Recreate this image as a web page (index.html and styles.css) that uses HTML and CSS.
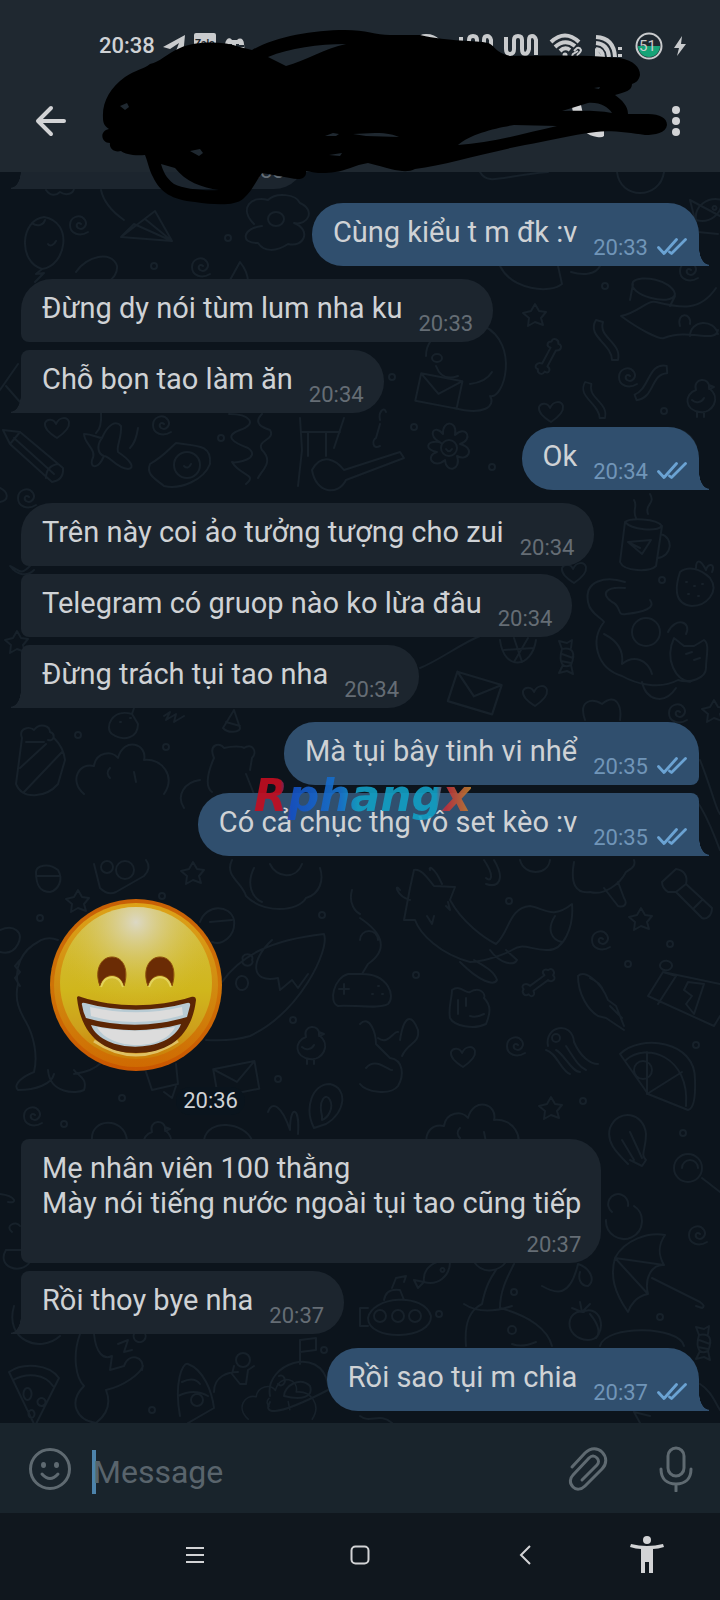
FILE: index.html
```html
<!DOCTYPE html>
<html lang="vi">
<head>
  <meta charset="UTF-8">
  <meta name="viewport" content="width=device-width, initial-scale=1.0">
  <title>Chat</title>
  <link rel="stylesheet" href="styles.css">
</head>
<body>
  <svg class="defs" width="0" height="0" aria-hidden="true">
    <defs>
      <symbol id="ticks" viewBox="0 0 30 17">
        <path d="M1.5 9.5L7 15.5L19.5 1.5M12.5 14L14.5 15.5L28.5 1.5" fill="none" stroke="currentColor" stroke-width="2.8" stroke-linecap="round" stroke-linejoin="round"/>
      </symbol>
      <path id="star" d="M0 -11L4 -4L11 -3L6 3L8 10L0 7L-7 11L-6 3L-12 -2L-4 -4Z"/>
      <path id="heart" d="M0 10C-8 5 -13 0 -12 -5C-10 -10 -3 -9 -1 -4C2 -11 10 -12 12 -6C13 0 6 6 0 10Z"/>
      <path id="swirl" d="M1 0C-2 -3 -5 1 -2 4C3 7 8 1 5 -4C0 -11 -10 -7 -10 1C-10 10 0 13 8 8"/>
      <path id="bone" d="M-9 -3L9 -3C8 -8 13 -9 15 -5C20 -6 20 1 16 2C17 7 11 8 9 3L-9 3C-10 8 -15 8 -15 3C-20 3 -20 -3 -16 -4C-17 -9 -10 -9 -9 -3Z"/>
      <circle id="dot" r="3"/>
      <path id="envelope" d="M-20 -14L22 -12L20 16L-22 14ZM-20 -14L0 4L22 -12"/>
      <path id="cloud" d="M-36 24C-52 10 -40 -8 -26 -4C-24 -18 -8 -20 -2 -12C4 -34 28 -26 24 -10C42 -12 56 6 44 24M-10 -2C-14 2 -12 6 -10 8M14 2L16 12"/>
      <path id="candy" d="M-5 -8C-9 6 -4 12 4 8C9 -4 6 -10 -5 -8ZM-5 -8L-8 -16L0 -14L5 -17L4 -9M-4 8L-8 16L0 14L6 17L4 8M-5 -3L6 1M-6 4L4 6"/>
      <path id="ribbon" d="M-12 -20C-22 -4 4 4 4 20L10 20C14 2 -10 -2 -5 -18Z"/>
      <path id="chick" d="M-4 -6C-8 -18 10 -20 9 -8C22 2 12 18 0 16C-16 14 -16 -2 -4 -6ZM9 -11L14 -9L9 -7M-8 4C-4 8 2 6 4 2M-3 16V21M4 16V21"/>
      <path id="pizza" d="M-24 -20C-10 -30 16 -28 26 -14L2 34ZM-20 -12C-6 -20 12 -18 20 -6M-6 -4A4 6 0 1 0 -5 -4M8 6A4 4 0 1 0 9 6M-2 18A3 4 0 1 0 -1 18"/>
      <path id="flower" d="M-7 -5C-22 -12 -14 -25 -5 -14C-6 -28 10 -28 7 -13C18 -24 26 -8 12 -4C28 0 20 14 9 8C14 22 -2 26 -3 12C-14 22 -24 8 -11 4C-24 2 -22 -8 -9 -6M9 0A8 8 0 1 0 -7 0A8 8 0 1 0 9 0M-2 1C0 4 2 4 4 1"/>
      <path id="fish" d="M-14 10C-16 -4 -2 -14 12 -10C12 4 0 14 -14 10L-20 16L-24 8L-14 10M4 -4A2 2 0 1 0 5 -4"/>
    </defs>
  </svg>

  <header class="topbar">
    <div class="status">
      <div class="status-group left">
        <span class="clock">20:38</span>
        <svg class="st-plane" viewBox="0 0 24 24"><path d="M1 13L23 1L21 22L14 17L17 9L8 15Z"/></svg>
        <svg class="st-zalo" viewBox="0 0 24 28"><rect x="1" y="1" width="22" height="26" rx="2"/><text x="2" y="15">Zalo</text></svg>
        <svg class="st-game" viewBox="0 0 22 24"><path fill-rule="evenodd" d="M1 10C2 4 6 3 8 6H13C16 3 20 5 20 10L21 20H1ZM5 10V16H8V10ZM12 10V16H16V13H20V11H15V10Z"/></svg>
      </div>
      <div class="status-group">
        <svg class="st-wave" viewBox="0 0 34 28"><path d="M3 9Q6 4 12 4Q20 4 24 9"/></svg>
        <svg class="st-wave" viewBox="0 0 34 28"><path d="M2 5V19Q2 24 6 24T10 19V8Q10 4 14 4T18 8V19Q18 24 21 24T25 19V8Q25 4 28 4T32 8V24"/></svg>
        <svg class="st-wave" viewBox="0 0 34 28"><path d="M2 5V17Q2 22 6 22T10 17V8Q10 4 14 4T18 8V17Q18 22 21 22T25 17V8Q25 4 28 4T32 8V23"/></svg>
        <svg class="st-wifi" viewBox="0 0 34 28"><path d="M2 10Q16 -3 30 10M6 15Q16 6 26 14M11 19Q16 14 21 18"/><circle cx="16" cy="23" r="2.5"/><path class="thin" d="M25 19L28 16Q31 15 32 18Q32 20 28 23M29 19L24 22Q22 25 25 26L29 24"/></svg>
        <svg class="st-cast" viewBox="0 0 28 28"><path d="M1 5Q19 6 20 25M1 11Q13 12 14 25M1 17Q8 18 8 25"/><path d="M1 20L6 26H1Z"/><path class="dots" d="M25 15V18M25 22V25"/></svg>
        <svg class="st-battery" viewBox="0 0 28 28"><circle class="cell" cx="14" cy="14" r="12.5"/><path class="level" d="M3 14H25A11 11 0 0 1 3 14Z"/><text x="4" y="19">51</text></svg>
        <svg class="st-bolt" viewBox="0 0 14 24"><path d="M9 2L1 14H6L4 22L13 10H8Z"/></svg>
      </div>
    </div>
    <div class="toolbar">
      <button type="button" class="icon-btn" aria-label="Back">
        <svg width="32" height="32" viewBox="0 0 32 32"><path class="arrow" d="M16 3L3 16L16 29M4 16H29"/></svg>
      </button>
      <div class="toolbar-actions">
        <button type="button" class="icon-btn" aria-label="Call">
          <svg width="36" height="36" viewBox="0 0 36 36"><path class="solid" d="M1 2H10L12 11L9 15Q13 23 20 26L24 22L33 25V33Q31 35 26 34Q12 32 5 16Q1 9 1 2Z"/></svg>
        </button>
        <button type="button" class="icon-btn" aria-label="More">
          <svg width="10" height="32" viewBox="0 0 10 32"><g class="solid"><circle cx="5" cy="5" r="4"/><circle cx="5" cy="16" r="4"/><circle cx="5" cy="27" r="4"/></g></svg>
        </button>
      </div>
    </div>
    <svg class="scribble" viewBox="100 26 570 182" aria-hidden="true">
      <path fill-rule="evenodd" d="M103 118C102 102 110 88 125 77C135 70 144 69 150 64C160 62 166 54 180 48C197 41 222 41 240 47L252 50C275 37 312 30 345 30C366 30 376 35 390 35L420 35C450 42 475 40 488 43C496 46 494 52 510 56C550 55 595 55 620 58C634 61 640 67 640 75C639 81 635 83 632 84C632 91 625 92 615 95C622 100 628 106 628 114L648 114C660 114 667 118 667 125C666 133 655 135 645 135C630 133 610 130 596 132C570 135 548 141 525 145C480 154 445 165 415 169C405 174 395 170 368 163C355 165 345 171 335 172C323 174 315 173 306 171C307 180 298 180 290 178L262 173C256 181 252 191 243 199C235 206 215 205 195 202C172 200 160 192 153 177C149 170 148 162 145 155C133 156 125 154 121 151C114 153 109 148 110 143C101 143 99 131 109 129C104 126 103 122 103 118Z
        M268 57C290 48 318 44 346 44C325 48 305 61 286 66Z
        M161 164L175 168C185 181 202 188 219 190C203 191 184 189 174 184C166 178 163 171 161 164Z
        M458 145C470 134 496 128 514 125L557 126C522 134 490 143 458 145Z
        M562 111L588 103C600 102 608 107 612 113C595 110 580 111 562 111Z
        M325 136L333 133L339 134L336 136ZM353 134L375 133C388 133 394 135 399 137L366 136Z
        M329 155L342 153L340 156ZM120 106L127 103L129 107L125 110ZM190 151L200 149L203 153L199 156ZM594 88L600 87L599 89Z"/>
    </svg>
  </header>

  <main class="chat">
    <svg class="wallpaper" viewBox="0 172 720 1251" preserveAspectRatio="xMidYMin slice" aria-hidden="true">
      <use href="#dot" x="228" y="238"/><use href="#dot" x="154" y="266"/><use href="#dot" x="605" y="286"/><use href="#dot" x="392" y="377"/><use href="#dot" x="414" y="427"/>
      <use href="#dot" x="221" y="438"/><use href="#dot" x="492" y="467"/><use href="#dot" x="664" y="411"/><use href="#dot" x="662" y="580"/><use href="#dot" x="78" y="735"/>
      <use href="#dot" x="166" y="747"/><use href="#dot" x="40" y="918"/><use href="#dot" x="162" y="896"/><use href="#dot" x="322" y="915"/><use href="#dot" x="293" y="1020"/>
      <use href="#dot" x="278" y="1079"/><use href="#dot" x="122" y="1098"/><use href="#dot" x="64" y="1124"/><use href="#dot" x="416" y="975"/><use href="#dot" x="509" y="901"/>
      <use href="#dot" x="628" y="964"/><use href="#dot" x="670" y="944"/><use href="#dot" x="696" y="1045"/><use href="#dot" x="583" y="1101"/><use href="#dot" x="683" y="1133"/>
      <use href="#dot" x="514" y="1292"/><use href="#dot" x="660" y="1317"/><use href="#dot" x="324" y="1350"/><use href="#dot" x="152" y="1410"/><use href="#dot" x="439" y="1314"/>
      <use href="#star" x="535" y="315"/><use href="#star" x="17" y="642"/><use href="#star" x="78" y="901"/><use href="#star" x="193" y="873"/><use href="#star" x="641" y="919"/><use href="#star" x="551" y="1108"/><use href="#star" x="714" y="711"/>
      <use href="#heart" x="57" y="428"/><use href="#heart" x="551" y="412"/><use href="#heart" x="535" y="696"/><use href="#heart" x="463" y="1057"/><use href="#heart" x="574" y="573"/>
      <use href="#swirl" x="80" y="224"/><use href="#swirl" x="202" y="266"/><use href="#swirl" x="163" y="424"/><use href="#swirl" x="690" y="270"/><use href="#swirl" x="629" y="376"/><use href="#swirl" x="679" y="712"/><use href="#swirl" x="602" y="939"/><use href="#swirl" x="517" y="1045"/><use href="#swirl" x="34" y="1115"/><use href="#swirl" x="699" y="1234"/><use href="#swirl" x="28" y="497"/>
      <use href="#bone" transform="translate(549 357) rotate(-62)"/><use href="#bone" transform="translate(539 983) rotate(-36)"/>
      <use href="#envelope" transform="translate(439 390) rotate(8)"/><use href="#envelope" transform="translate(475 692) rotate(14) scale(1.1)"/><use href="#envelope" transform="translate(236 1078) rotate(-14)"/>
      <use href="#cloud" x="120" y="770"/><use href="#cloud" x="470" y="1130"/><use href="#cloud" transform="translate(277 1400) scale(.8)"/>
      <use href="#candy" x="567" y="657"/><use href="#candy" x="704" y="1343"/>
      <use href="#ribbon" x="608" y="340"/><use href="#ribbon" transform="translate(596 400) scale(.9)"/><use href="#ribbon" transform="translate(652 384) rotate(70)"/>
      <use href="#chick" x="700" y="396"/><use href="#chick" x="310" y="1043"/><use href="#chick" x="156" y="1138"/>
      <use href="#pizza" x="33" y="1392"/><use href="#flower" x="448" y="448"/><use href="#fish" x="438" y="1272"/><use href="#fish" x="710" y="210"/>
      <!-- balloon, paper plane, clam -->
      <path d="M44 217C20 220 18 262 42 269C66 266 74 222 44 217ZM42 269L36 274L44 273L35 282M48 244C50 247 54 245 56 241M32 223C38 228 44 224 45 220"/>
      <path d="M121 237L155 211L172 241ZM172 241L134 224L121 237M145 219L172 241M101 190C104 204 114 213 124 220"/>
      <path d="M254 224C238 208 252 195 268 200C276 192 296 194 300 203C316 210 308 226 294 223C312 230 304 248 288 244C276 252 264 252 258 243C240 244 242 228 262 226M284 219A8 7 0 1 0 268 219A8 7 0 1 0 284 219"/>
      <path d="M76 272C86 256 112 250 117 266C118 276 110 280 104 286M230 280L240 262Q248 272 248 282M176 180C184 190 196 194 206 198M46 190C50 196 56 196 60 192C66 196 74 194 74 188"/>
      <!-- pencil, top spinner, egg, guitar player -->
      <path d="M3 430L20 432L63 468Q64 480 52 482L10 444ZM20 432L10 444M46 478Q46 466 58 464M14 438L54 474"/>
      <path d="M84 434C92 434 98 438 102 438C108 424 116 420 121 426C122 438 116 446 118 452C130 460 136 468 128 469C116 468 110 456 104 456C98 470 90 468 92 460C98 450 84 444 84 434ZM102 438C96 446 98 454 104 456M138 428Q136 442 130 448M101 412Q102 428 96 433"/>
      <path d="M176 443C196 446 212 444 210 464C204 480 180 490 164 486C154 478 146 474 150 464C164 456 168 450 176 443ZM200 465A13 13 0 1 0 174 465A13 13 0 1 0 200 465M184 466Q188 470 191 464"/>
      <path d="M229 414C250 414 258 424 240 430C224 436 232 442 248 448C262 458 236 464 232 462C240 476 258 474 246 484M262 414C252 424 264 428 270 430C276 440 256 440 262 450C274 462 262 470 258 478"/>
      <path d="M300 418L302 450L298 486M344 418L334 448M302 432H340M308 432V456M326 432V456M312 470C322 452 336 460 344 470L400 452L404 458L346 480C338 496 316 494 312 470ZM380 420C378 412 384 406 386 412M380 446C372 450 372 440 376 438L380 424"/>
      <!-- bear with letter, sleeping fox -->
      <path d="M426 356C426 330 460 322 478 336M484 326C520 344 504 400 490 396C496 406 484 416 454 408M432 358A5 4 0 1 0 442 358A5 4 0 1 0 432 358M436 366Q442 382 458 376M470 384Q486 382 492 372"/>
      <path d="M633 282C626 294 672 308 675 294C672 280 640 274 633 282ZM633 284L630 300M675 296L670 306M621 316C640 312 646 300 656 302C680 308 700 312 716 288M621 316C640 330 660 340 664 338M664 338C690 328 716 344 718 330M680 326C676 312 692 312 690 324M690 336C690 320 714 318 718 334"/>
      <path d="M500 266C512 290 550 294 562 284L558 266M571 272C584 276 596 274 600 266M666 428C680 428 690 432 696 446M480 172C488 186 500 176 548 172M617 172C620 200 660 200 664 172M690 200L720 216M690 200L698 232L718 234"/>
      <!-- cup, strawberry, ring cat -->
      <path d="M625 522L620 562C624 572 650 572 656 566L662 526C656 518 630 518 625 522ZM625 522C632 530 656 532 662 526M661 534C674 538 672 556 658 558M628 542L651 540L642 554ZM628 542L640 548M636 518C632 510 638 506 634 500M648 514C644 504 656 504 650 494"/>
      <path d="M680 572C688 566 700 568 710 578C720 592 706 606 692 606C672 604 676 584 680 572ZM696 568C696 560 700 558 706 570C708 562 716 564 712 572M686 582H687M694 586H695M702 584H703M688 594H689M698 596H699"/>
      <path d="M625 582C606 576 584 580 588 602C590 614 602 618 604 622C590 640 596 668 622 676C636 684 660 690 678 680C690 684 706 678 706 668C706 656 710 644 704 640L694 646H684L674 638C664 660 676 680 690 682M625 588C606 586 600 594 612 602C622 606 616 616 626 614C644 612 656 608 650 600M660 632A14 14 0 1 0 632 632A14 14 0 1 0 660 632M604 634C616 640 624 650 622 664C634 654 648 660 652 674M668 632C676 616 692 622 686 634M642 682C646 700 664 706 676 688M686 654L692 652M694 660L700 658"/>
      <path d="M500 640C504 672 532 668 536 640M504 650L534 648M514 638L522 662M528 638L514 662M420 668C440 660 460 644 480 636M585 720C578 700 592 698 602 704C616 692 622 706 620 720"/>
      <!-- popcorn, acorn, carnival cone, bear -->
      <path d="M22 738C18 728 30 726 34 730C40 722 50 726 50 732C56 734 54 742 48 740M22 738L16 784C22 800 46 798 58 784L65 760C64 750 58 742 54 738M26 742L44 742M20 768L46 744M24 792L62 752"/>
      <path d="M132 714C112 708 104 728 112 734C124 742 138 738 138 724ZM132 714L134 708M120 722H121M130 718H131M223 728C228 734 240 732 240 728L234 710ZM226 722L240 726M164 716L170 712L166 720L176 714L174 722L184 716"/>
      <path d="M214 758C208 744 220 742 224 748C232 746 242 746 244 748C252 742 258 752 252 758L250 770M214 758C206 776 206 788 212 792M200 780C184 782 176 796 184 808M246 774L254 794"/>
      <path d="M36 872C36 866 48 862 58 870C64 880 58 890 50 892C38 892 36 882 36 872ZM36 876H60M94 864L100 888Q108 896 116 892L144 876Q152 868 146 860M113 867A6 6 0 1 0 101 867A6 6 0 1 0 113 867M134 870A9 9 0 1 0 116 870A9 9 0 1 0 134 870"/>
      <path d="M232 860C224 876 242 882 246 896C264 914 298 912 306 898C320 894 324 880 320 868M254 868C246 884 252 898 262 902M270 864C276 878 296 880 302 864M352 890C348 904 356 912 360 914"/>
      <!-- dinosaur, rocket ship, bunny -->
      <path d="M0 930C14 924 24 932 18 944C14 952 8 954 0 952M38 942C22 950 14 968 18 984C14 1000 20 1012 26 1022C34 1036 38 1056 34 1072C24 1076 12 1084 18 1090C36 1090 52 1084 54 1074M48 1070C50 1094 76 1094 84 1090C88 1078 78 1076 74 1070M74 1074C90 1072 98 1066 102 1062M20 960L15 966L20 972L15 978L20 986M58 940C48 936 40 940 38 942"/>
      <path d="M222 982C240 956 270 940 324 934C330 950 300 1012 250 1036C230 1042 214 1040 206 1040M272 940C250 960 250 984 278 978L280 990L292 980L298 988L308 974M252 960A5 4 0 1 0 243 960A5 4 0 1 0 252 960M248 982A6 7 0 1 0 236 984A6 7 0 1 0 248 982M200 922C206 904 230 904 234 920C236 936 222 946 212 942M210 922L232 920"/>
      <path d="M146 1072L152 1090L178 1084L176 1064M164 1092L172 1098L176 1086M268 1112C272 1100 282 1106 290 1130C290 1104 300 1106 298 1134M314 1128C304 1108 312 1084 330 1084C348 1088 346 1112 326 1124ZM322 1116C318 1100 326 1092 330 1100C334 1108 328 1118 322 1120ZM92 1140C90 1118 124 1116 127 1140M204 1140C208 1118 244 1122 252 1140"/>
      <!-- sea fox, octopus cap, fish bowl, squid -->
      <path d="M404 920L410 888L414 870C420 868 426 876 434 886L455 887L450 900C462 922 484 938 496 944C510 932 508 908 530 906C544 908 552 920 572 904C574 926 564 952 546 950C530 950 524 942 512 950C502 956 480 962 470 962C440 954 420 934 415 920ZM430 870C428 866 434 866 442 884M410 900C396 896 394 882 400 890M555 916C546 930 552 940 562 942M460 962C480 982 494 986 497 980C494 970 480 964 474 960M490 950C500 964 514 966 517 960L506 950M427 916L432 924L434 916M446 906L450 910L448 902"/>
      <path d="M484 860C496 878 490 882 486 878M494 860C506 880 498 888 486 884M520 860C524 876 548 876 550 860M574 862C570 884 576 894 590 892C604 896 620 884 626 872C632 868 636 866 634 860M604 888L618 906C624 908 628 904 624 898L618 882"/>
      <path d="M452 990C460 984 466 994 470 992C480 986 486 994 484 998C492 1006 490 1014 486 1024C474 1030 454 1026 450 1018C448 1008 452 998 452 990ZM466 998V1006M458 1000V1014M470 1016Q476 1018 484 1014"/>
      <path d="M578 976C584 970 600 980 608 1000L616 1006L624 1026M578 976C578 994 588 1010 598 1016L606 1018L624 1030M610 1006L622 1018M590 978Q600 982 604 992"/>
      <path d="M548 1046C544 1026 572 1020 574 1042C580 1056 590 1064 598 1064M546 1050C556 1052 562 1072 570 1074M556 1050C564 1054 572 1072 580 1072M566 1046C574 1058 578 1066 586 1070M560 1038A4 4 0 1 0 552 1038A4 4 0 1 0 560 1038"/>
      <path d="M662 882L676 869C684 870 688 876 686 884L712 908C712 916 706 920 702 918L676 892L668 892Q662 888 662 882ZM676 892L686 884M694 908L702 900"/>
      <path d="M648 996L663 972L720 984M648 996L714 1026L720 1016M663 972L676 976L658 1004M688 982L684 990L692 996L686 1004L694 1014L704 984ZM672 966A5 4 0 1 0 660 965A5 4 0 1 0 672 966"/>
      <path d="M620 1054C640 1034 696 1040 695 1080Q696 1108 688 1110L648 1094ZM626 1060C646 1042 690 1056 686 1106M647 1052V1094L682 1072M652 1070A9 9 0 1 0 634 1070A9 9 0 1 0 652 1070"/>
      <path d="M360 918C384 934 388 950 368 964L362 974C388 974 396 996 388 1004C378 1010 348 1004 338 1006C328 1002 334 978 348 974L362 974M378 986H379M372 994H373M382 994H383M344 984V994M339 989H349M378 940A9 9 0 1 0 360 940"/>
      <path d="M360 1024C370 1014 376 1034 376 1044L390 1058C404 1060 404 1076 398 1086C390 1096 366 1092 360 1084M378 1038C388 1046 394 1030 398 1032M400 1040C404 1014 412 1014 418 1030C420 1044 408 1042 402 1056M366 1068C376 1056 390 1072 392 1070"/>
      <!-- bulb, lollipop, umbrella, submarine, sea monster -->
      <path d="M628 1164C616 1152 606 1142 610 1128C618 1108 644 1112 646 1134C646 1150 640 1154 646 1160L642 1166L630 1160M622 1140L634 1160M630 1132L642 1158M702 1168A14 14 0 1 0 674 1168A14 14 0 1 0 702 1168M698 1168A8 8 0 1 0 682 1168M702 1178L720 1192"/>
      <path d="M634 1206A18 18 0 1 1 606 1220M628 1206A10 10 0 1 0 612 1212M615 1258C624 1240 648 1232 665 1235C656 1248 660 1258 664 1265C652 1264 644 1278 648 1294C636 1296 630 1306 628 1312C614 1292 610 1276 615 1258ZM615 1258L648 1294M615 1258L664 1265M652 1278L700 1302Q706 1306 702 1308L696 1306"/>
      <path d="M368 1318C372 1296 424 1292 431 1316C432 1340 368 1342 368 1318ZM386 1316A6 6 0 1 0 374 1316A6 6 0 1 0 386 1316M404 1316A6 6 0 1 0 392 1316A6 6 0 1 0 404 1316M421 1316A6 6 0 1 0 409 1316A6 6 0 1 0 421 1316M384 1300Q386 1288 400 1290L404 1300M392 1288L396 1278L406 1276L404 1282M368 1308H360V1326H368"/>
      <path d="M466 1346C464 1322 470 1310 482 1304C486 1284 492 1276 496 1270M514 1264C508 1276 500 1290 500 1308C530 1316 548 1330 552 1346M464 1304Q482 1316 512 1306M474 1262C484 1276 500 1270 506 1262M516 1330A3 3 0 1 0 508 1330A3 3 0 1 0 516 1330M512 1344Q522 1348 536 1342"/>
      <path d="M542 1286C556 1294 570 1298 578 1264C590 1268 596 1280 588 1286C580 1286 578 1278 580 1272M584 1312C566 1308 562 1338 588 1340C608 1340 604 1302 582 1312ZM582 1312L572 1308M580 1302L582 1312L590 1304M590 1314C600 1326 600 1334 596 1338M600 1346C606 1324 680 1326 684 1346M700 1384C710 1390 714 1400 720 1410M640 1423L634 1412L650 1416"/>
      <!-- moon sleeper, rocket, planet -->
      <path d="M14 1306C4 1340 40 1354 60 1336M80 1334C72 1356 76 1378 84 1386C68 1402 76 1420 96 1423C110 1412 110 1400 106 1390C124 1386 140 1374 143 1366M94 1334C96 1354 104 1360 112 1356L110 1370L124 1366C128 1352 146 1356 142 1370M118 1344L128 1340L124 1352L132 1350M134 1334A6 6 0 1 0 144 1332"/>
      <path d="M180 1416C174 1384 182 1362 188 1364C204 1370 212 1392 214 1408L188 1423M182 1382Q194 1376 200 1384M178 1396Q194 1388 208 1396M203 1400A6 6 0 1 0 191 1400A6 6 0 1 0 203 1400M214 1392C214 1376 228 1372 238 1372M234 1366L232 1374L240 1384H246L248 1370L254 1366M250 1360A7 7 0 1 0 236 1360A7 7 0 1 0 250 1360"/>
      <path d="M270 1396C264 1364 320 1344 328 1384M300 1364V1340L316 1338V1350L300 1352M284 1396C284 1386 300 1376 310 1386C314 1398 300 1400 284 1396ZM278 1384A4 5 0 1 0 279 1376M270 1402C264 1412 270 1420 328 1390M360 1416C370 1424 380 1412 392 1423"/>
      <path d="M0 502C10 500 8 492 0 488M30 566C20 576 20 570 10 566C16 574 26 578 34 570M0 1194C16 1196 18 1204 8 1202M12 1232C4 1226 16 1220 20 1226M6 1250C-4 1266 20 1276 30 1262M6 1250H30M0 390L18 364M6 386L20 402M700 760C712 790 716 810 720 814M696 800C708 816 714 836 720 850"/>
    </svg>

    <div class="messages">
      <div class="msg in tail first-clipped"><time class="time">20:33</time></div>
      <div class="msg out tail turn"><p>Cùng kiểu t m đk :v</p><time class="time">20:33</time><svg class="ticks"><use href="#ticks"/></svg></div>
      <div class="msg in start turn"><p>Đừng dy nói tùm lum nha ku</p><time class="time">20:33</time></div>
      <div class="msg in tail"><p>Chỗ bọn tao làm ăn</p><time class="time">20:34</time></div>
      <div class="msg out tail turn"><p>Ok</p><time class="time">20:34</time><svg class="ticks"><use href="#ticks"/></svg></div>
      <div class="msg in start turn"><p>Trên này coi ảo tưởng tượng cho zui</p><time class="time">20:34</time></div>
      <div class="msg in"><p>Telegram có gruop nào ko lừa đâu</p><time class="time">20:34</time></div>
      <div class="msg in tail"><p>Đừng trách tụi tao nha</p><time class="time">20:34</time></div>
      <div class="msg out start turn"><p>Mà tụi bây tinh vi nhể</p><time class="time">20:35</time><svg class="ticks"><use href="#ticks"/></svg></div>
      <div class="msg out tail joined"><p>Có cả chục thg vô set kèo :v</p><time class="time">20:35</time><svg class="ticks"><use href="#ticks"/></svg><span class="watermark">Rphangx</span></div>
      <div class="sticker">
        <svg class="face" viewBox="0 0 172 172" role="img" aria-label="Grinning face">
          <defs>
            <linearGradient id="rim" x1="0" y1="0" x2="0" y2="1"><stop offset="0" stop-color="#c85f05"/><stop offset=".5" stop-color="#cf7407"/><stop offset="1" stop-color="#c95600"/></linearGradient>
            <linearGradient id="edge" x1="0" y1="0" x2="0" y2="1"><stop offset="0" stop-color="#dda218"/><stop offset=".5" stop-color="#d18c10"/><stop offset="1" stop-color="#cf6a02"/></linearGradient>
            <linearGradient id="skin" x1="0" y1="0" x2="0" y2="1"><stop offset="0" stop-color="#d5bd45"/><stop offset=".55" stop-color="#d0b61c"/><stop offset=".8" stop-color="#cda01c"/><stop offset="1" stop-color="#cc7d06"/></linearGradient>
            <radialGradient id="shine" cx=".5" cy=".1" r=".56"><stop offset="0" stop-color="#dcd8c4"/><stop offset="1" stop-color="#d5c02a" stop-opacity="0"/></radialGradient>
          </defs>
          <circle cx="86" cy="86" r="86" fill="url(#rim)"/>
          <circle cx="86" cy="86" r="82" fill="url(#edge)"/>
          <circle cx="86" cy="84" r="76" fill="url(#skin)"/>
          <circle cx="86" cy="84" r="76" fill="url(#shine)"/>
          <g fill="#6b2c05" stroke="#8a4c0a" stroke-width="1">
            <path d="M50 87C44 71 51 58 62 58C74 58 79 72 74 87C70 73 54 73 50 87Z"/>
            <path d="M98 87C92 71 99 58 110 58C122 58 127 72 122 87C118 73 102 73 98 87Z"/>
          </g>
          <path d="M51 88C55 75 69 75 73 88M99 88C103 75 117 75 121 88" fill="none" stroke="#e3d35c" stroke-width="2"/>
          <path d="M44 142Q86 170 128 142" fill="none" stroke="#dfc062" stroke-width="3"/>
          <path d="M27 99C27 97 29 97 31 98C65 109 107 109 141 98C144 97 146 98 146 101C142 136 120 154 86 154C53 154 31 136 27 99Z" fill="#5c2604"/>
          <path d="M32 106Q31 103 35 104C68 113 104 113 137 104Q141 103 140 107L137 118C104 128 68 128 36 119Q33 113 32 106Z" fill="#b8cbd4"/>
          <path d="M40 108C70 115 102 115 132 108L133 116C104 125 68 125 41 117Z" fill="#dcdcdc"/>
          <path d="M41 126C70 133 102 133 131 125C121 154 53 156 41 126Z" fill="#b8cbd4"/>
          <path d="M47 128C72 133 100 133 125 128C114 152 60 152 47 128Z" fill="#dcdcdc"/>
        </svg>
        <time class="badge">20:36</time>
      </div>
      <div class="msg in wrap"><p>Mẹ nhân viên 100 thằng<br>Mày nói tiếng nước ngoài tụi tao cũng tiếp</p><time class="time">20:37</time></div>
      <div class="msg in tail"><p>Rồi thoy bye nha</p><time class="time">20:37</time></div>
      <div class="msg out tail turn"><p>Rồi sao tụi m chia</p><time class="time">20:37</time><svg class="ticks"><use href="#ticks"/></svg></div>
    </div>
  </main>

  <form class="compose">
    <button type="button" class="icon-btn" aria-label="Emoji">
      <svg width="44" height="44" viewBox="0 0 44 44"><circle class="line" cx="22" cy="22" r="19.5"/><ellipse class="eye" cx="15.5" cy="18" rx="2.5" ry="3"/><ellipse class="eye" cx="28.5" cy="18" rx="2.5" ry="3"/><path class="line" d="M14 27Q22 36 30 27"/></svg>
    </button>
    <div class="field"><input type="text" id="message" placeholder="Message" aria-label="Message"></div>
    <button type="button" class="icon-btn" aria-label="Attach">
      <svg width="44" height="44" viewBox="0 0 44 44"><path class="line" d="M6 20L19 6C25 0 32 1 36 5C41 10 41 17 36 22L19 39C15 43 10 43 7 40C3 36 4 31 7 28L23 11C26 8 29 9 31 11C33 13 33 16 31 18L16 33"/></svg>
    </button>
    <button type="button" class="icon-btn" aria-label="Voice message">
      <svg width="36" height="46" viewBox="0 0 36 46"><rect class="line" x="10" y="2" width="16" height="28" rx="8"/><path class="line" d="M3 23C3 33 9 38 18 38S33 33 33 23M18 38V45"/></svg>
    </button>
  </form>

  <nav class="navbar">
    <button type="button" class="icon-btn" aria-label="Recent apps"><svg width="20" height="20" viewBox="0 0 20 20"><path class="navline" d="M1 3H19M1 10H19M1 17H19"/></svg></button>
    <button type="button" class="icon-btn" aria-label="Home"><svg width="20" height="20" viewBox="0 0 20 20"><rect class="navline" x="1.5" y="1.5" width="17" height="17" rx="4"/></svg></button>
    <button type="button" class="icon-btn" aria-label="Back"><svg width="12" height="20" viewBox="0 0 12 20"><path class="navline" d="M11 1L2 10L11 19"/></svg></button>
    <button type="button" class="icon-btn access" aria-label="Accessibility"><svg width="34" height="38" viewBox="0 0 34 38"><g class="solid"><circle cx="17" cy="4" r="4"/><path d="M1 8Q17 12 33 8L34 11Q28 13 23 13V37H19V26H15V37H11V13Q6 13 0 11Z"/></g></svg></button>
  </nav>
</body>
</html>
```
FILE: styles.css
```css
* {
  margin: 0;
  padding: 0;
  box-sizing: border-box;
}

body {
  height: 100vh;
  display: flex;
  flex-direction: column;
  background-color: #0c141c;
  color: #cfd2d5;
  font-family: Roboto, "Noto Sans", sans-serif;
  overflow: hidden;
}

.defs {
  position: absolute;
}

.icon-btn {
  display: flex;
  background: none;
  border: none;
  color: inherit;
  cursor: pointer;
}

.solid {
  fill: #d2d3d5;
}

/* header */
.topbar {
  position: relative;
  z-index: 2;
  flex: none;
  padding: 32px 39px 35px 35px;
  background-color: #1f2830;
}

.status,
.status-group,
.toolbar,
.toolbar-actions {
  display: flex;
  align-items: center;
}

.status {
  height: 28px;
  justify-content: space-between;
  padding-left: 64px;
  margin-right: -6px;
  fill: #c9cbcd;
}

.status-group {
  gap: 8px;
}

.status-group.left {
  gap: 7px;
}

.status svg {
  flex: none;
}

.clock {
  font-size: 22px;
  font-weight: 500;
  line-height: 32px;
}

.st-plane {
  width: 24px;
  height: 24px;
}

.st-zalo {
  width: 24px;
  height: 28px;
}

.st-zalo text {
  font-size: 10px;
  font-weight: 700;
  fill: #1f2830;
}

.st-game {
  width: 22px;
  height: 24px;
}

.st-wave {
  width: 34px;
  height: 28px;
  margin-right: 3px;
}

.st-wave path,
.st-wifi path,
.st-cast path {
  fill: none;
  stroke: #c9cbcd;
  stroke-width: 4;
}

.st-wifi {
  width: 34px;
  height: 28px;
}

.st-wifi .thin {
  stroke-width: 2;
}

.st-cast {
  width: 28px;
  height: 28px;
  margin: 0 4px;
}

.st-battery {
  width: 28px;
  height: 28px;
}

.st-battery .cell {
  fill: #1f2830;
  stroke: #c9cbcd;
  stroke-width: 2;
}

.st-battery .level {
  fill: #16a377;
}

.st-battery text {
  font-size: 15px;
}

.st-bolt {
  width: 14px;
  height: 24px;
  margin-left: 2px;
}

.toolbar {
  justify-content: space-between;
  height: 77px;
  padding-top: 45px;
}

.toolbar-actions {
  gap: 64px;
}

.arrow {
  fill: none;
  stroke: #d2d3d5;
  stroke-width: 4;
  stroke-linecap: round;
  stroke-linejoin: round;
}

.scribble {
  position: absolute;
  left: 100px;
  top: 26px;
  width: 570px;
  height: 182px;
  fill: #000;
}

/* chat */
.chat {
  position: relative;
  flex: 1;
  min-height: 0;
  overflow: hidden;
  display: flex;
  flex-direction: column;
  justify-content: flex-end;
}

.wallpaper {
  position: absolute;
  inset: 0;
  width: 100%;
  height: 100%;
  fill: none;
  stroke: #17212a;
  stroke-width: 2;
  stroke-linejoin: round;
  stroke-linecap: round;
}

.messages {
  position: relative;
  display: flex;
  flex-direction: column;
  padding: 0 21px 12px;
}

.msg {
  position: relative;
  display: flex;
  align-items: flex-end;
  min-height: 63px;
  margin-top: 8px;
  padding: 12px 20px 5px 21px;
}

.msg p {
  margin-bottom: 11px;
  font-size: 29px;
  line-height: 35px;
}

.in.turn {
  margin-top: 13px;
}

.out.turn {
  margin-top: 14px;
}

.time {
  margin-left: 16px;
  font-size: 22px;
  line-height: 26px;
}

.in {
  align-self: flex-start;
  background-color: #1c252e;
  border-radius: 8px 31px 31px 8px;
}

.in.start {
  border-top-left-radius: 31px;
}

.in.tail {
  border-bottom-left-radius: 0;
}

.in .time {
  color: #656d75;
}

.out {
  align-self: flex-end;
  padding-right: 12px;
  background-color: #304f6e;
  border-radius: 31px;
}

.out.start {
  border-bottom-right-radius: 8px;
}

.out.tail {
  border-bottom-right-radius: 0;
}

.out.joined {
  border-top-right-radius: 8px;
}

.out .time {
  color: #7095b8;
}

.tail::after {
  content: "";
  position: absolute;
  bottom: 0;
  width: 10px;
  height: 18px;
}

.in.tail::after {
  right: 100%;
  background: radial-gradient(10px 17px at 0 0, transparent 96%, #1c252e 100%);
}

.out.tail::after {
  left: 100%;
  background: radial-gradient(10px 17px at 100% 0, transparent 96%, #304f6e 100%);
}

.ticks {
  width: 30px;
  height: 17px;
  margin: 0 0 6px 9px;
  color: #6ba3d3;
}

.first-clipped {
  width: 284px;
  justify-content: flex-end;
}

.wrap {
  flex-direction: column;
  margin-top: 0;
}

.watermark {
  position: absolute;
  left: 56px;
  top: -22px;
  font-family: "DejaVu Sans", sans-serif;
  font-size: 44px;
  font-weight: 700;
  font-style: italic;
  line-height: 50px;
  color: transparent;
  background: linear-gradient(90deg, #c40d20 12%, #1450c4 17%, #1673cc 40%, #129fc4 48%, #129fc4 84%, #c02c3c 88%, #c08030);
  -webkit-background-clip: text;
  background-clip: text;
  opacity: .9;
}

/* big emoji */
.sticker {
  display: flex;
  flex-direction: column;
  gap: 16px;
  width: 195px;
  margin: 43px 0 24px 29px;
}

.face {
  width: 172px;
  height: 172px;
}

.badge {
  align-self: flex-end;
  padding: 0 7px;
  border-radius: 14px;
  background-color: #0a141d;
  font-size: 22px;
  line-height: 28px;
}

/* message box */
.compose {
  flex: none;
  display: flex;
  align-items: center;
  height: 90px;
  padding: 2px 26px 0 28px;
  background-color: #19242c;
}

.compose .icon-btn + .icon-btn {
  margin-left: 48px;
}

.line {
  fill: none;
  stroke: #5f6a71;
  stroke-width: 3;
  stroke-linecap: round;
}

.eye {
  fill: #5f6a71;
}

.field {
  flex: 1;
  min-width: 0;
  height: 44px;
  margin-top: 6px;
  margin-left: 20px;
  border-left: 4px solid #4d83ab;
}

.field input {
  width: 100%;
  height: 44px;
  margin-left: -3px;
  background: none;
  border: none;
  outline: none;
  color: #cfd2d5;
  font-family: inherit;
  font-size: 32px;
}

.field input::placeholder {
  color: #59646c;
}

/* system navigation */
.navbar {
  flex: none;
  display: grid;
  grid-template-columns: 1fr 146px 184px 146px 1fr;
  align-items: center;
  justify-items: center;
  height: 87px;
  padding-bottom: 4px;
  background-color: #10171e;
}

.navbar .icon-btn:first-child {
  grid-column: 2;
}

.navbar .access {
  margin-right: 24px;
}

.navline {
  fill: none;
  stroke: #d2d3d5;
  stroke-width: 2;
}
```
